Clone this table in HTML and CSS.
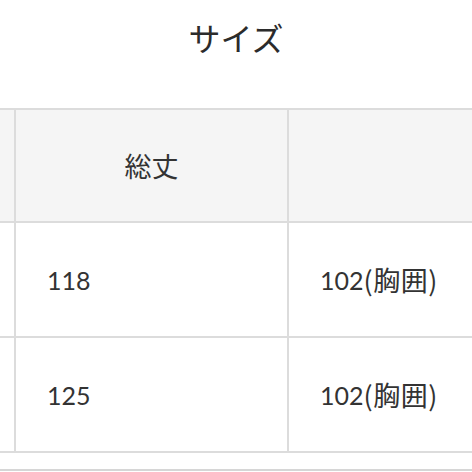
FILE: index.html
```html
<!DOCTYPE html>
<html lang="ja">
<head>
<meta charset="utf-8">
<link rel="stylesheet" href="styles.css">
</head>
<body>
<div class="page">
  <h1 class="title">サイズ</h1>
  <div class="table">
    <div class="cell head"></div>
    <div class="cell head center">総丈</div>
    <div class="cell head"></div>
    <div class="cell"></div>
    <div class="cell">118</div>
    <div class="cell">102<span class="jp">(胸囲)</span></div>
    <div class="cell"></div>
    <div class="cell">125</div>
    <div class="cell">102<span class="jp">(胸囲)</span></div>
  </div>
  <div class="footer"></div>
</div>
</body>
</html>
```

FILE: styles.css
```css
html, body {
  margin: 0;
  padding: 0;
  background: #fff;
}
.page {
  width: 472px;
  height: 472px;
  overflow: hidden;
  font-family: "Lato", "Noto Sans CJK JP", sans-serif;
  color: #333;
}
.title {
  margin: 0;
  height: 108px;
  padding-top: 17px;
  box-sizing: border-box;
  text-align: center;
  font-family: "Noto Sans CJK JP", sans-serif;
  font-weight: 400;
  font-size: 32px;
  line-height: 40px;
  color: #2b2b2b;
}
.table {
  display: grid;
  grid-template-columns: 14px 271px 1fr;
  grid-template-rows: 111px 113px 113px;
  gap: 2px;
  background: #dcdcdc;
  border-top: 2px solid #dcdcdc;
  border-bottom: 2px solid #dcdcdc;
}
.cell {
  background: #fff;
  display: flex;
  align-items: center;
  padding-left: 31px;
  font-size: 25px;
}
.cell:nth-child(3n+1) {
  padding-left: 0;
}
.jp {
  font-family: "Noto Sans CJK JP", sans-serif;
  font-size: 27px;
  letter-spacing: 0.5px;
}
.head {
  background: #f5f5f5;
}
.center {
  justify-content: center;
  padding-left: 0;
  font-family: "Noto Sans CJK JP", sans-serif;
  font-size: 27px;
}
.footer {
  height: 16px;
  border-bottom: 2px solid #d6d6d6;
}
```
